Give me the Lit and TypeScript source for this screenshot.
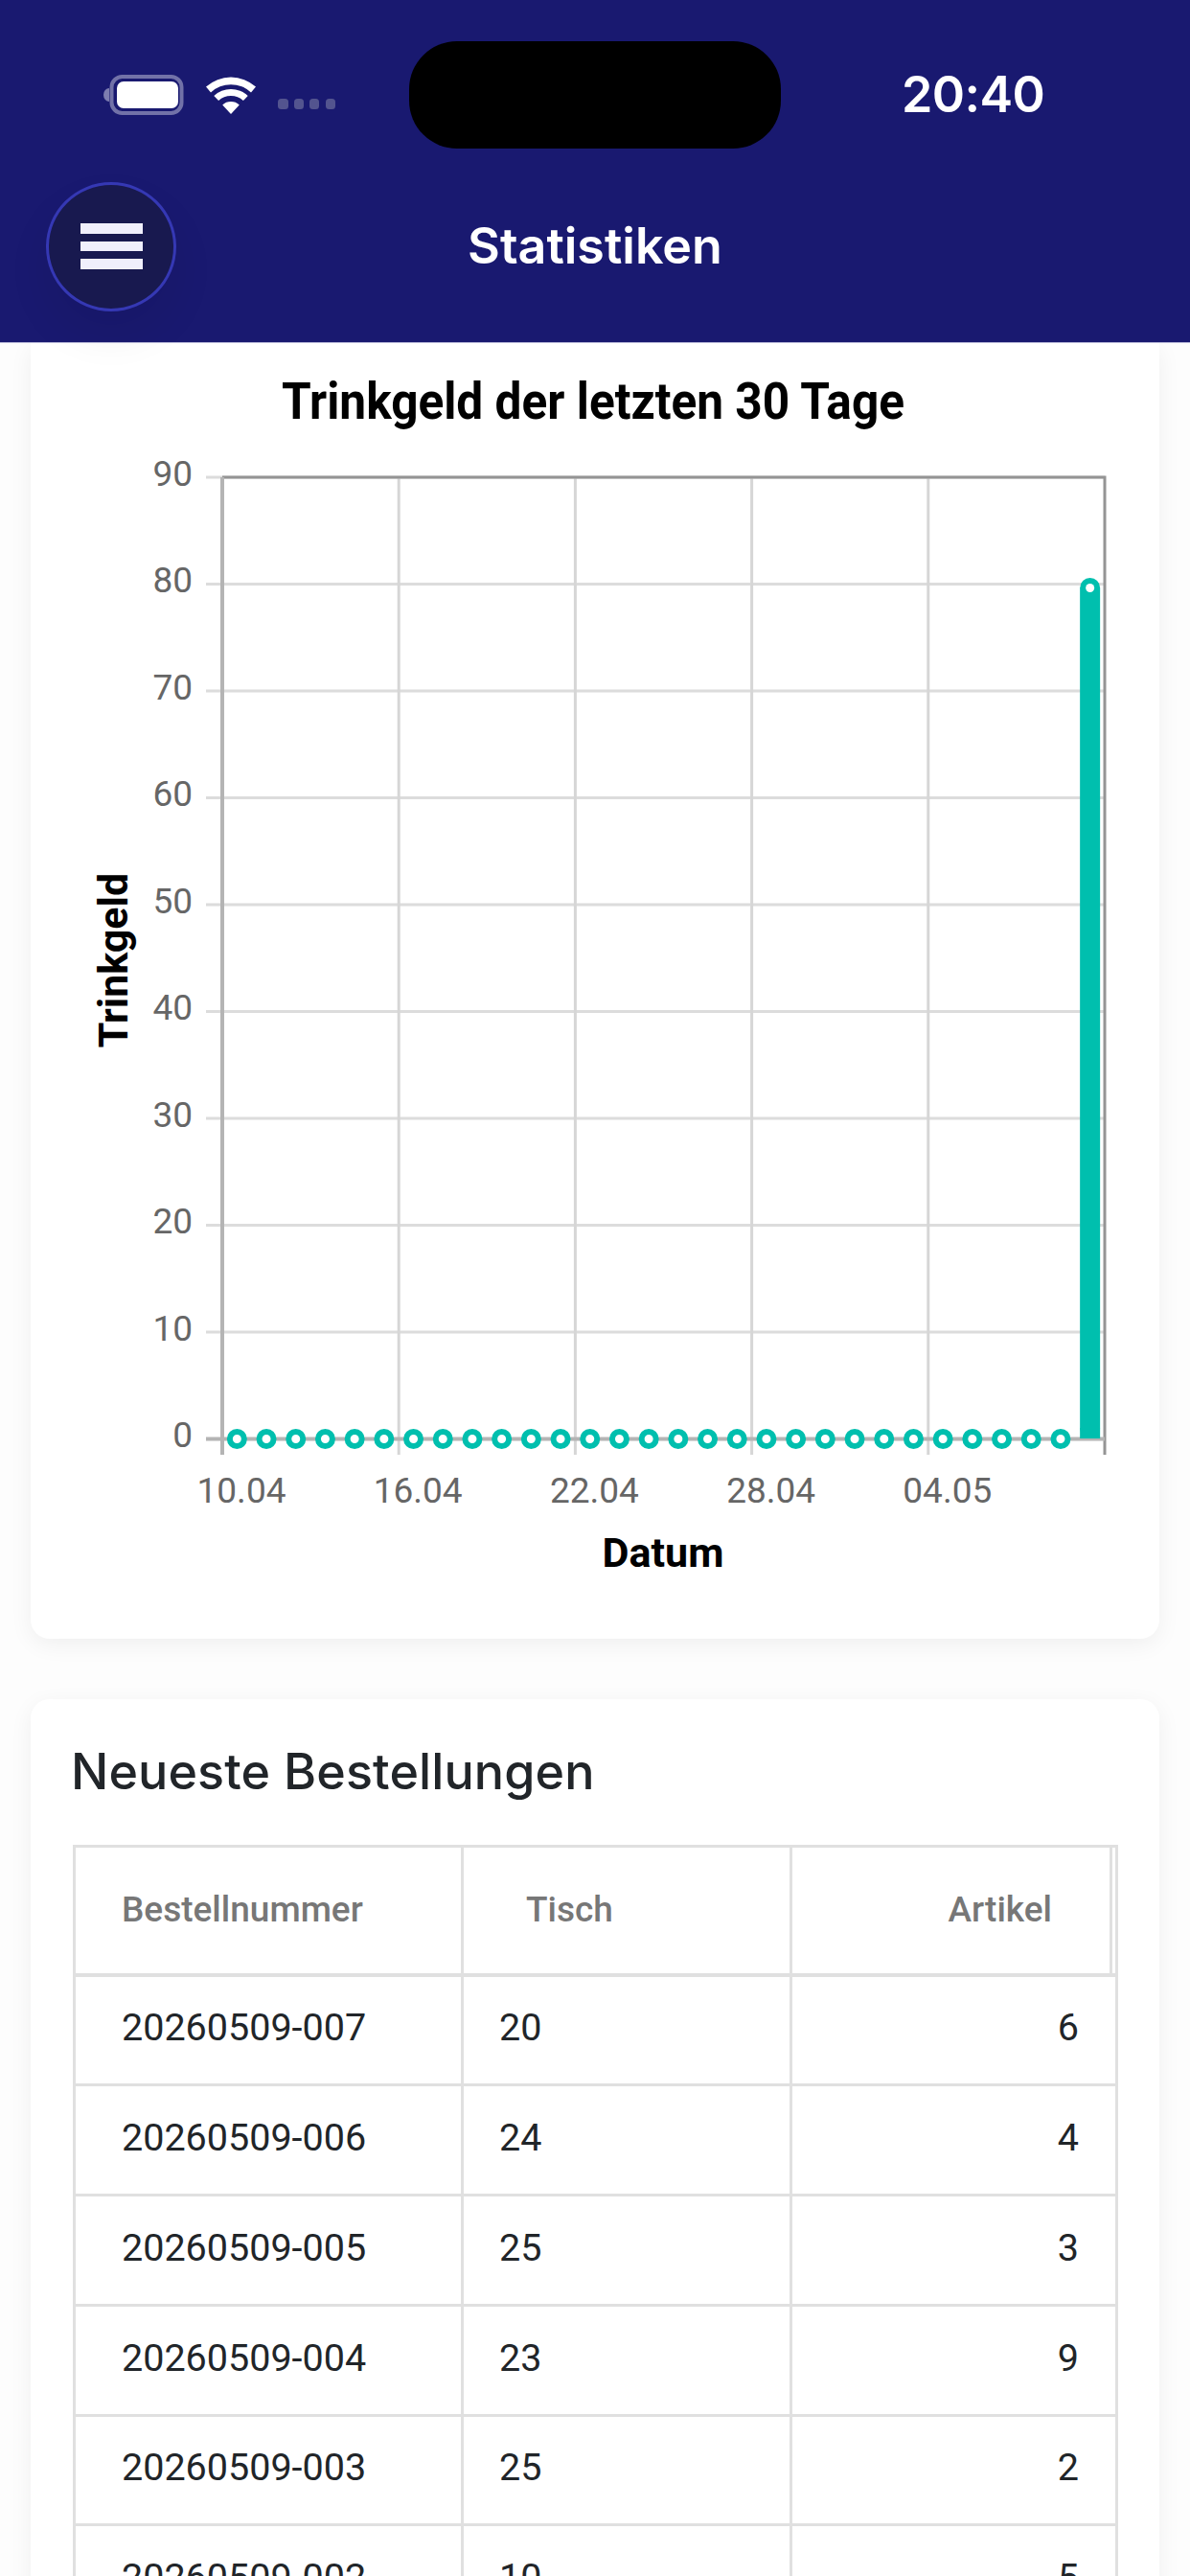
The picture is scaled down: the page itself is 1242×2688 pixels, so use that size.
import { LitElement, html, css, svg } from "lit";
import { customElement } from "lit/decorators.js";

const PLOT = { left: 232, right: 1153, top: 498, bottom: 1501.5 };
const yStep = (PLOT.bottom - PLOT.top) / 9;
const xStep = (PLOT.right - PLOT.left) / 5;
const dotStep = xStep / 6;
const dates = ["10.04", "16.04", "22.04", "28.04", "04.05"];
const orders = [
  ["20260509-007", "20", "6"],
  ["20260509-006", "24", "4"],
  ["20260509-005", "25", "3"],
  ["20260509-004", "23", "9"],
  ["20260509-003", "25", "2"],
  ["20260509-002", "10", "5"],
];

@customElement("app-root")
export class AppRoot extends LitElement {
  static styles = css`
    :host {
      display: block;
      position: relative;
      width: 1242px;
      height: 2688px;
      overflow: hidden;
      background: #fdfdfd;
      font-family: "Roboto", sans-serif;
    }
    .top {
      position: relative;
      z-index: 2;
      height: 357px;
      background: #191970;
      border-bottom: 1px solid #b9b9d8;
      color: #fff;
    }
    .status {
      display: flex;
      align-items: center;
      height: 112px;
      padding: 43px 0 0 108px;
    }
    .status svg { display: block; flex: none; }
    .wifi { margin-left: 23px; }
    .dots { margin-left: 23px; margin-top: 19px; }
    .pill {
      width: 388px;
      height: 112px;
      margin-left: 77px;
      border-radius: 50px;
      background: #000;
      flex: none;
    }
    .time {
      margin-left: 126px;
      font: 600 52px "Inter", sans-serif;
      letter-spacing: -0.6px;
      line-height: 1;
    }
    .nav {
      display: grid;
      grid-template-columns: 1fr auto 1fr;
      align-items: center;
      height: 200px;
      padding: 2px 0 0 48px;
    }
    .menu {
      display: flex;
      flex-direction: column;
      justify-content: center;
      align-items: center;
      gap: 8px;
      box-sizing: border-box;
      width: 136px;
      height: 135px;
      border-radius: 50%;
      background: #18194f;
      border: 3px solid #3538b4;
      box-shadow: 0 24px 46px rgba(0, 0, 0, 0.07);
    }
    .menu i {
      display: block;
      width: 65px;
      height: 10.5px;
      background: #f0effc;
    }
    .title {
      font: 600 52px "Inter", sans-serif;
      line-height: 1;
      padding-right: 48px;
    }
    main {
      display: flex;
      flex-direction: column;
      gap: 63px;
      padding: 0 32px;
    }
    .card {
      background: #fff;
      border-radius: 20px;
      box-shadow: 0 6px 24px rgba(0, 0, 0, 0.06);
    }
    .chart-card {
      height: 1352px;
      border-radius: 0 0 20px 20px;
    }
    .chart-card svg { display: block; }
    .grid-h { stroke: #dcdcdc; stroke-width: 3; }
    .grid-v { stroke: #d6d6d6; stroke-width: 3; }
    .axis { stroke: #b4b4b4; stroke-width: 4; }
    .edge { stroke: #949494; stroke-width: 3; fill: none; }
    .tick { font: 400 37px "Roboto", sans-serif; fill: #666; }
    .chart-title { font: 700 53px "Roboto", sans-serif; fill: #000; }
    .axis-title { font: 700 43px "Roboto", sans-serif; fill: #000; }
    .bar { stroke: #00bfae; stroke-width: 21; stroke-linecap: round; }
    .bar-base { fill: #00bfae; }
    .dot { fill: #fff; stroke: #00bfae; stroke-width: 6; }
    .hole { fill: #fff; }
    .orders { padding: 0 44px; }
    h2 {
      margin: 0 0 0 -2px;
      padding: 47px 0 47px;
      font: 500 52px "Inter", sans-serif;
      letter-spacing: 0.1px;
      line-height: 58px;
      color: #212529;
    }
    .table {
      border: solid #e0e0e0;
      border-width: 3px 3px 0;
      width: 1091px;
      box-sizing: border-box;
    }
    .row {
      display: grid;
      grid-template-columns: 405px 343px 1fr;
      height: 114.75px;
      box-sizing: border-box;
      border-bottom: 3.5px solid #e0e0e0;
      align-items: stretch;
    }
    .head {
      height: 134.5px;
      padding-right: 3px;
      border-bottom: 4px solid #e0e0e0;
      font: 500 37px "Roboto", sans-serif;
      color: #777;
    }
    .cell {
      display: flex;
      align-items: center;
      box-sizing: border-box;
      padding: 0 37px;
      border-right: 3px solid #e0e0e0;
      font: 400 39.5px "Roboto", sans-serif;
      color: #212529;
      padding-bottom: 5px;
    }
    .row .cell:last-child { border-right: 0; justify-content: flex-end; padding-right: 38px; }
    .row .cell:first-child { padding-left: 48px; }
    .head .cell { font: inherit; color: inherit; padding-bottom: 2px; }
    .head .cell:nth-child(2) { padding-left: 65px; }
    .head .cell:last-child { border-right: 3px solid #e0e0e0; padding-right: 60px; }
  `;

  private chart() {
    const hLines = Array.from({ length: 10 }, (_, i) => PLOT.bottom - i * yStep);
    const vLines = Array.from({ length: 6 }, (_, i) => PLOT.left + i * xStep);
    const dots = Array.from({ length: 29 }, (_, i) => PLOT.left + dotStep * (i + 0.5));
    const lastX = PLOT.left + dotStep * 29.5;
    const lastY = 613.5;
    return svg`
      <svg width="1178" height="1352" viewBox="32 358 1178 1352">
        <text class="chart-title" x="294" y="437" textLength="650" lengthAdjust="spacingAndGlyphs">Trinkgeld der letzten 30 Tage</text>
        ${hLines.slice(1).map((y) => svg`<line class="grid-h" x1="215" x2="${PLOT.right}" y1="${y}" y2="${y}"></line>`)}
        ${vLines.slice(1, 5).map((x) => svg`<line class="grid-v" x1="${x}" x2="${x}" y1="${PLOT.top}" y2="1518"></line>`)}
        <path class="edge" d="M${PLOT.left} ${PLOT.top}H${PLOT.right}V1518"></path>
        <line class="axis" x1="215" x2="${PLOT.right}" y1="${PLOT.bottom}" y2="${PLOT.bottom}"></line>
        <line class="axis" x1="${PLOT.left}" x2="${PLOT.left}" y1="${PLOT.top}" y2="1518"></line>
        ${hLines.map((y, i) => svg`<text class="tick" x="201" y="${y + 8.5}" text-anchor="end">${i * 10}</text>`)}
        ${dates.map((d, i) => svg`<text class="tick" x="${vLines[i] + 20}" y="1568" text-anchor="middle">${d}</text>`)}
        <text class="axis-title" x="692" y="1635" text-anchor="middle">Datum</text>
        <text class="axis-title" transform="translate(133 1002) rotate(-90)" text-anchor="middle">Trinkgeld</text>
        ${dots.map((x) => svg`<circle class="dot" cx="${x}" cy="${PLOT.bottom}" r="7.5"></circle>`)}
        <line class="bar" x1="${lastX}" x2="${lastX}" y1="${lastY}" y2="1490"></line>
        <rect class="bar-base" x="${lastX - 10.5}" y="1490" width="21" height="11"></rect>
        <circle class="hole" cx="${lastX}" cy="${lastY}" r="4.5"></circle>
      </svg>
    `;
  }

  render() {
    return html`
      <header class="top">
        <div class="status">
          <svg width="84" height="42" viewBox="0 0 84 42">
            <path d="M6 14a6 7 0 0 0 0 14z" fill="#7d7db0"></path>
            <rect x="8.5" y="2" width="73" height="38" rx="11" fill="none" stroke="#7272a8" stroke-width="4"></rect>
            <rect x="14" y="7" width="64" height="28" rx="7" fill="#fff"></rect>
          </svg>
          <svg class="wifi" width="52" height="39" viewBox="0 0 52 39">
            <path fill="#fff" d="M0 10.5A39 39 0 0 1 52 10.5L47 16.4A31 31 0 0 0 5 16.4Z"></path>
            <path fill="#fff" d="M8.3 20A26 26 0 0 1 43.7 20L38.9 25.1A19 19 0 0 0 13.1 25.1Z"></path>
            <path fill="#fff" d="M17.2 29.5A13 13 0 0 1 34.8 29.5L26 39Z"></path>
          </svg>
          <svg class="dots" width="60" height="11" viewBox="0 0 60 11">
            <rect x="0" width="11" height="11" rx="3.5" fill="#53548f"></rect>
            <rect x="17" width="10" height="11" rx="3.5" fill="#53548f"></rect>
            <rect x="33" width="10" height="11" rx="3.5" fill="#53548f"></rect>
            <rect x="50" width="10" height="11" rx="3.5" fill="#53548f"></rect>
          </svg>
          <div class="pill"></div>
          <div class="time">20:40</div>
        </div>
        <div class="nav">
          <div class="menu"><i></i><i></i><i></i></div>
          <div class="title">Statistiken</div>
        </div>
      </header>
      <main>
        <section class="card chart-card">${this.chart()}</section>
        <section class="card orders">
          <h2>Neueste Bestellungen</h2>
          <div class="table">
            <div class="row head">
              <div class="cell">Bestellnummer</div>
              <div class="cell">Tisch</div>
              <div class="cell">Artikel</div>
            </div>
            ${orders.map(
              (o) => html`<div class="row">
                <div class="cell">${o[0]}</div>
                <div class="cell">${o[1]}</div>
                <div class="cell">${o[2]}</div>
              </div>`
            )}
          </div>
        </section>
      </main>
    `;
  }
}
